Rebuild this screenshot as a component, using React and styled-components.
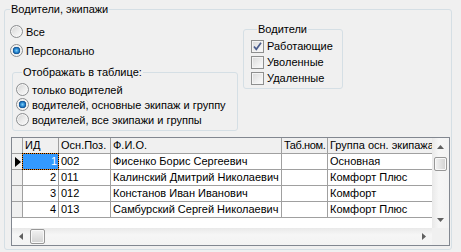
import React from 'react';
import styled, { createGlobalStyle } from 'styled-components';

const GlobalStyle = createGlobalStyle`
  html, body { margin: 0; padding: 0; background: #f0f0f0; }
  body {
    font-family: "Liberation Sans", Arial, sans-serif;
    font-size: 11px;
    color: #000;
  }
  #root { width: 461px; height: 252px; overflow: hidden; }
`;

const Page = styled.div`
  width: 461px;
  height: 252px;
  box-sizing: border-box;
  padding: 2px 0 0 4px;
  background: #f0f0f0;
`;

const Group = styled.fieldset`
  margin: 0;
  min-width: 0;
  box-sizing: border-box;
  width: ${p => p.$width}px;
  padding: ${p => p.$pad};
  border: 1px solid #d5dfe5;
  border-radius: 3px;
`;

const Legend = styled.legend`
  padding: 0 1px;
  margin-left: ${p => p.$indent}px;
  line-height: 14px;
`;

const TopRow = styled.div`
  display: flex;
  align-items: flex-start;
  padding-top: 6px;
`;

const LeftCol = styled.div`
  width: 233px;
  box-sizing: border-box;
  padding-left: 5px;
  display: flex;
  flex-direction: column;
  align-items: flex-start;
`;

const Option = styled.label`
  display: flex;
  align-items: center;
  gap: 3px;
  height: ${p => p.$h}px;
  white-space: nowrap;
`;

const Radio = styled.span`
  width: 13px;
  height: 13px;
  box-sizing: border-box;
  border-radius: 50%;
  border: 1px solid #8c8e90;
  flex: none;
  background: ${p =>
    p.$on
      ? 'radial-gradient(circle at 50% 50%, #7fd0f7 0, #2c8ad3 2px, #0f4f8f 3.5px, #e8e8e8 4px, #f4f4f4 100%)'
      : 'linear-gradient(135deg, #d2d2d2 0%, #ececec 55%, #fbfbfb 100%)'};
  box-shadow: inset 0 0 0 1px #f6f6f6;
`;

const InnerGroupWrap = styled.div`
  margin: 5px 0 0 2px;
`;

const RightGroupWrap = styled.div`
  margin-left: 5px;
`;

const Box = styled.span`
  width: 13px;
  height: 13px;
  box-sizing: border-box;
  border: 1px solid #8e8f8f;
  flex: none;
  background: linear-gradient(135deg, #d9d9d9 0%, #efefef 60%, #fcfcfc 100%);
  box-shadow: inset 0 0 0 1px #f4f4f4;
  display: flex;
  align-items: center;
  justify-content: center;
`;

const GridBox = styled.div`
  margin: 6px 0 0 6px;
  width: 439px;
  height: 109px;
  box-sizing: border-box;
  border: 1px solid #828790;
  display: grid;
  grid-template-columns: 420px 17px;
  grid-template-rows: 90px 17px;
  background: #fff;
`;

const DataArea = styled.div`
  overflow: hidden;
  background: #fff;
`;

const Row = styled.div`
  display: grid;
  grid-template-columns: 11px 36px 52px 171px 46px 120px;
  height: 16px;
`;

const Cell = styled.div`
  box-sizing: border-box;
  height: 16px;
  line-height: 15px;
  padding: ${p => (p.$right ? '0 2px 0 0' : '0 0 0 2px')};
  white-space: nowrap;
  overflow: hidden;
  letter-spacing: ${p => (p.$tight ? '-0.4px' : 'normal')};
  text-align: ${p => (p.$right ? 'right' : 'left')};
  border-right: 1px solid #a0a0a0;
  border-bottom: 1px solid #a0a0a0;
  background: ${p => (p.$fixed ? '#f0f0f0' : '#fff')};
`;

const Indicator = styled(Cell)`
  padding: 0;
  display: flex;
  align-items: center;
  justify-content: center;
`;

const Arrow = styled.span`
  width: 0;
  height: 0;
  margin-left: 1px;
  border-left: 6px solid #000;
  border-top: 5px solid transparent;
  border-bottom: 5px solid transparent;
`;

const SelectedCell = styled(Cell)`
  color: #fff;
  padding: 0 1px;
  border: 1px dotted #000;
  margin: -1px 0 0 -1px;
  height: 17px;
  width: 37px;
  line-height: 15px;
  background: linear-gradient(#3399ff, #3399ff) padding-box, linear-gradient(#e8801f, #e8801f) border-box;
`;

const VScroll = styled.div`
  display: flex;
  flex-direction: column;
  background: linear-gradient(90deg, #e9e9e9, #f6f6f6 40%, #f3f3f3);
`;

const HScroll = styled.div`
  display: flex;
  background: linear-gradient(180deg, #e9e9e9, #f6f6f6 40%, #f3f3f3);
`;

const Corner = styled.div`
  background: #f0f0f0;
`;

const ScrollBtn = styled.div`
  width: 17px;
  height: 17px;
  flex: none;
  display: flex;
  align-items: center;
  justify-content: center;
`;

const Track = styled.div`
  flex: 1;
  display: flex;
  flex-direction: ${p => (p.$vertical ? 'column' : 'row')};
  padding: ${p => (p.$vertical ? '2px 2px 0' : '1px 0 0 1px')};
`;

const Thumb = styled.div`
  box-sizing: border-box;
  width: ${p => (p.$vertical ? '13px' : '15px')};
  height: ${p => (p.$vertical ? '14px' : '15px')};
  border: 1px solid #979797;
  border-radius: 2px;
  background: ${p =>
    p.$vertical
      ? 'linear-gradient(90deg, #f2f2f2, #e2e2e2 50%, #d2d2d2)'
      : 'linear-gradient(180deg, #f2f2f2, #e2e2e2 50%, #d2d2d2)'};
  box-shadow: inset 0 0 0 1px #f8f8f8;
`;

const Tri = ({ dir }) => {
  const pts = {
    up: '0,4 3.5,0 7,4',
    down: '0,0 3.5,4 7,0',
    left: '4,0 0,3.5 4,7',
    right: '0,0 4,3.5 0,7',
  }[dir];
  const vert = dir === 'up' || dir === 'down';
  return (
    <svg width={vert ? 7 : 4} height={vert ? 4 : 7} viewBox={vert ? '0 0 7 4' : '0 0 4 7'}>
      <polygon points={pts} fill="#606060" />
    </svg>
  );
};

const Check = () => (
  <svg width="11" height="11" viewBox="0 0 11 11">
    <path d="M2 5.5 L4.3 8.3 L9 1.8" fill="none" stroke="#4a5c8c" strokeWidth="1.7" />
  </svg>
);

const rows = [
  { id: 1, pos: '002', fio: 'Фисенко Борис Сергеевич', tab: '', group: 'Основная' },
  { id: 2, pos: '011', fio: 'Калинский Дмитрий Николаевич', tab: '', group: 'Комфорт Плюс' },
  { id: 3, pos: '012', fio: 'Констанов Иван Иванович', tab: '', group: 'Комфорт' },
  { id: 4, pos: '013', fio: 'Самбурский Сергей Николаевич', tab: '', group: 'Комфорт Плюс' },
];

const App = () => (
  <Page>
    <GlobalStyle />
    <Group $width={448} $pad="0 0 3px 0">
      <Legend $indent={5}>Водители, экипажи</Legend>
      <TopRow>
        <LeftCol>
          <Option $h={19}><Radio />Все</Option>
          <Option $h={19}><Radio $on />Персонально</Option>
          <InnerGroupWrap>
            <Group $width={226} $pad="3px 0 3px 3px">
              <Legend $indent={6}>Отображать в таблице:</Legend>
              <Option $h={15}><Radio />только водителей</Option>
              <Option $h={15}><Radio $on />водителей, основные экипаж и группу</Option>
              <Option $h={15}><Radio />водителей, все экипажи и группы</Option>
            </Group>
          </InnerGroupWrap>
        </LeftCol>
        <RightGroupWrap>
          <Group $width={100} $pad="2px 0 2px 7px">
            <Legend $indent={6}>Водители</Legend>
            <Option $h={16}><Box><Check /></Box>Работающие</Option>
            <Option $h={16}><Box />Уволенные</Option>
            <Option $h={16}><Box />Удаленные</Option>
          </Group>
        </RightGroupWrap>
      </TopRow>
      <GridBox>
        <DataArea>
          <Row>
            <Cell $fixed />
            <Cell $fixed>ИД</Cell>
            <Cell $fixed>Осн.Поз.</Cell>
            <Cell $fixed>Ф.И.О.</Cell>
            <Cell $fixed $tight>Таб.ном.</Cell>
            <Cell $fixed>Группа осн. экипажа</Cell>
          </Row>
          {rows.map((r, i) => (
            <Row key={r.id}>
              <Indicator $fixed>{i === 0 && <Arrow />}</Indicator>
              {i === 0 ? <SelectedCell $right>{r.id}</SelectedCell> : <Cell $right>{r.id}</Cell>}
              <Cell>{r.pos}</Cell>
              <Cell>{r.fio}</Cell>
              <Cell>{r.tab}</Cell>
              <Cell>{r.group}</Cell>
            </Row>
          ))}
        </DataArea>
        <VScroll>
          <ScrollBtn><Tri dir="up" /></ScrollBtn>
          <Track $vertical><Thumb $vertical /></Track>
          <ScrollBtn><Tri dir="down" /></ScrollBtn>
        </VScroll>
        <HScroll>
          <ScrollBtn><Tri dir="left" /></ScrollBtn>
          <Track><Thumb /></Track>
          <ScrollBtn><Tri dir="right" /></ScrollBtn>
        </HScroll>
        <Corner />
      </GridBox>
    </Group>
  </Page>
);

export default App;
